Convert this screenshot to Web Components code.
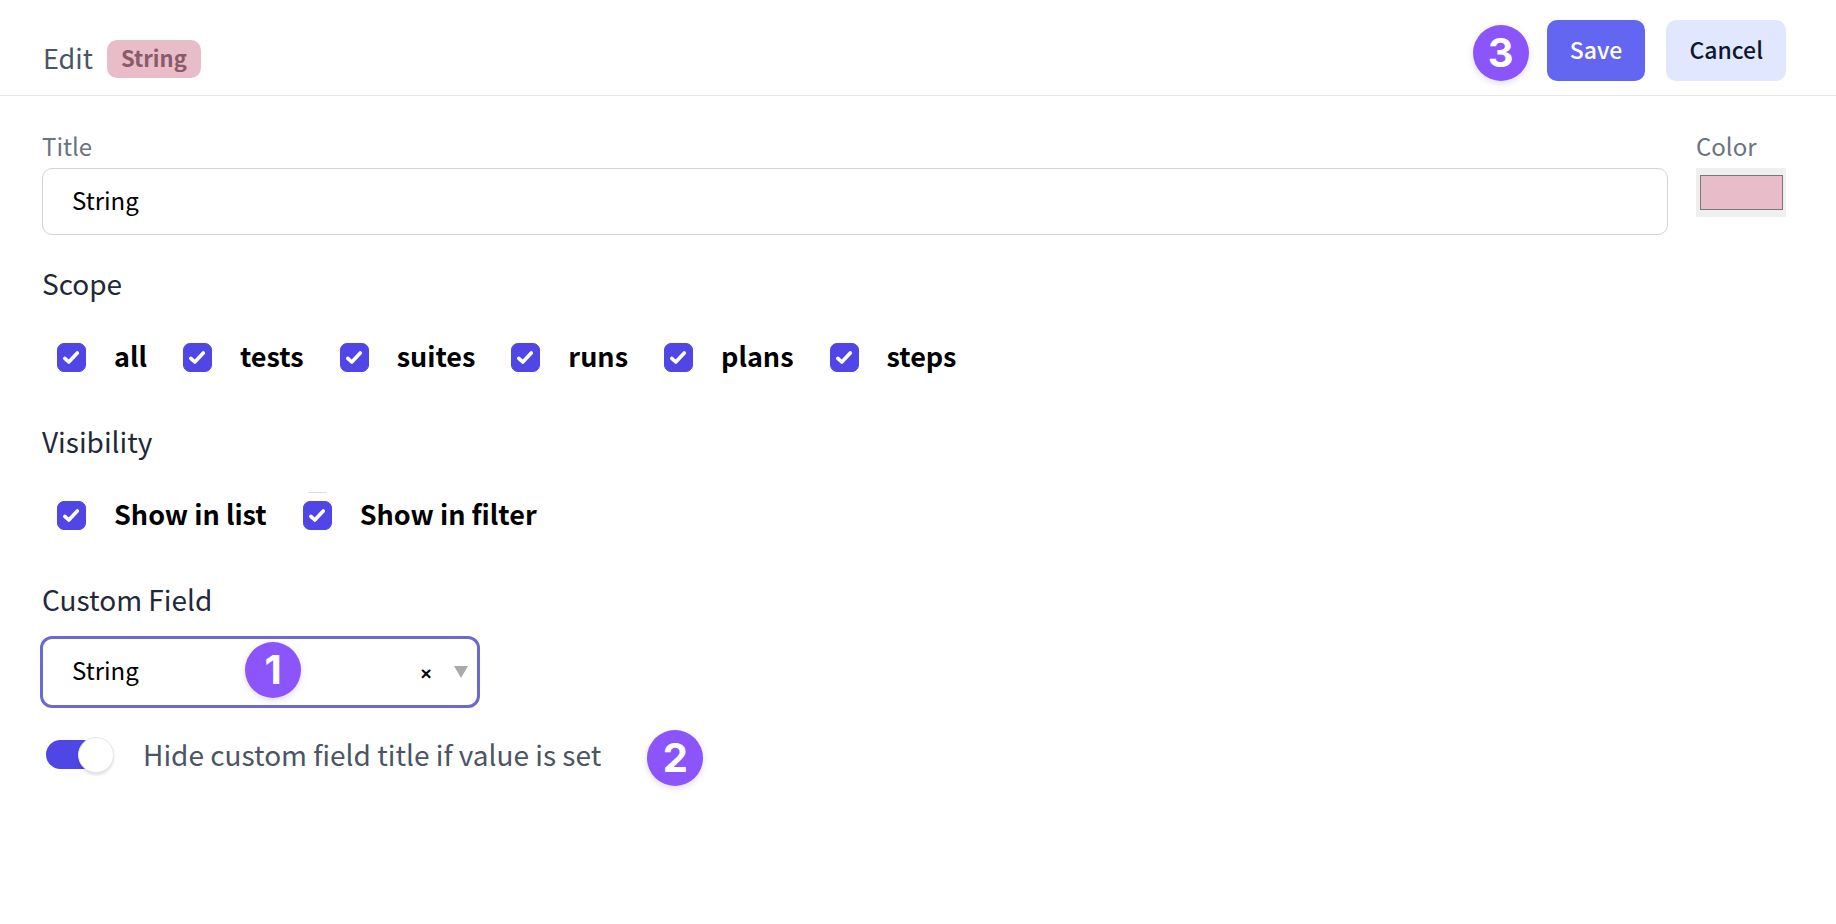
<!DOCTYPE html>
<html lang="en">
<head>
<meta charset="utf-8">
<meta name="viewport" content="width=device-width, initial-scale=1">
<title>Edit String</title>
<style>
  body { margin: 0; background: #fff; color: #000; font-family: "Noto Sans CJK SC", "Noto Sans", sans-serif; }
</style>
</head>
<body>
<field-editor></field-editor>
<script>
const define = (name, html, setup) => {
  const template = document.createElement('template');
  template.innerHTML = `<style>*, *::before { box-sizing: border-box; }</style>${html}`;
  customElements.define(name, class extends HTMLElement {
    constructor() {
      super();
      this.attachShadow({ mode: 'open' }).append(template.content.cloneNode(true));
    }
    connectedCallback() { if (setup) setup(this, this.shadowRoot); }
  });
};

define('step-badge', `
<style>
  :host { display: grid; place-items: center; flex: none; width: 56px; height: 56px; border-radius: 50%;
    background: #8c54fb; color: #fff; box-shadow: 0 2px 6px rgb(80 60 140 / 20%);
    font: 700 40px/56px Inter, sans-serif; }
</style>
<slot></slot>`);

define('action-button', `
<style>
  :host { display: block; }
  button { display: block; border: 0; border-radius: 10px; padding: 13px 23px 16px; cursor: pointer;
    font: 500 23px/32px "Noto Sans CJK SC", sans-serif; background: #e0e7ff; color: #0f172a; }
  :host([primary]) button { background: #6366f1; color: #fff; }
</style>
<button type="button"><slot></slot></button>`);

define('editor-header', `
<style>
  :host { display: flex; align-items: flex-start; justify-content: space-between; gap: 24px;
    padding: 20px 50px 14px 43px; border-bottom: 1px solid #e5e7eb; }
  .name { display: flex; align-items: flex-start; gap: 14px; padding-top: 20px; }
  h1 { margin: 0; font-weight: 400; font-size: 27px; line-height: 36px; color: #4b5563; }
  .tag { padding: 1px 14px 5px; border-radius: 10px; background: #e8bcc9; color: #8b5a68;
    font-weight: 700; font-size: 22px; line-height: 32px; }
  .actions { display: flex; align-items: center; gap: 21px; }
  step-badge { margin: 4px -3px 0 0; }
</style>
<div class="name"><h1>Edit</h1><span class="tag">String</span></div>
<div class="actions">
  <step-badge>3</step-badge>
  <action-button primary>Save</action-button>
  <action-button>Cancel</action-button>
</div>`);

define('text-field', `
<style>
  :host { display: flex; flex-direction: column; gap: 6px; }
  label { font-size: 24px; line-height: 32px; color: #6b7280; }
  input { width: 100%; height: 67px; padding: 0 29px 4px; border: 1px solid #d1d5db; border-radius: 10px;
    background: #fff; color: #000; outline: 0; font: 400 24px/36px "Noto Sans CJK SC", sans-serif; }
</style>
<label for="value"></label><input id="value" type="text">`, (host, root) => {
  root.querySelector('label').textContent = host.getAttribute('label');
  root.querySelector('input').value = host.getAttribute('value');
});

define('color-field', `
<style>
  :host { display: flex; flex-direction: column; gap: 6px; }
  label { font-size: 24px; line-height: 32px; color: #6b7280; }
  input { appearance: none; width: 90px; height: 49px; padding: 7px 3px 7px 4px; border: 0; background: #efefef; }
  input::-webkit-color-swatch-wrapper { padding: 0; }
  input::-webkit-color-swatch { border: 1px solid #777; border-radius: 0; }
</style>
<label for="value"></label><input id="value" type="color">`, (host, root) => {
  root.querySelector('label').textContent = host.getAttribute('label');
  root.querySelector('input').value = host.getAttribute('value');
});

define('check-option', `
<style>
  :host { display: block; position: relative; }
  :host([marked])::before { content: ""; position: absolute; left: 5px; top: -5px; width: 19px; height: 1px; background: #dcdde0; }
  label { display: flex; align-items: center; gap: 28px; font-weight: 700; font-size: 27px; line-height: 34px; }
  .text { padding-bottom: 2px; }
  .box { display: grid; width: 29px; height: 29px; }
  .box > * { grid-area: 1 / 1; margin: 0; width: 29px; height: 29px; }
  input { appearance: none; border-radius: 7px; border: 1px solid #d1d5db; background: #fff; }
  input:checked { border-color: #4f46e5; background: #4f46e5; }
  svg { pointer-events: none; }
  input:not(:checked) + svg { visibility: hidden; }
</style>
<label>
  <span class="box"><input type="checkbox" checked>
    <svg viewBox="0 0 29 29" fill="none" stroke="#fff" stroke-width="3.6" stroke-linecap="round" stroke-linejoin="round"><path d="M7.8 15.4 11.8 19 20.3 10"/></svg></span>
  <span class="text"><slot></slot></span>
</label>`);

define('option-group', `
<style>
  :host { display: block; }
  fieldset { border: 0; margin: 0; padding: 0; min-width: 0; }
  legend { padding: 0; font-size: 28px; line-height: 36px; color: #1f2937; }
  .options { display: flex; flex-wrap: wrap; gap: 16px 36px; padding: 38px 0 0 15px; }
</style>
<fieldset><legend></legend><div class="options"><slot></slot></div></fieldset>`, (host, root) => {
  root.querySelector('legend').textContent = host.getAttribute('label');
});

define('type-select', `
<style>
  :host { display: flex; flex-direction: column; gap: 19px; }
  label { font-size: 28px; line-height: 36px; color: #1f2937; }
  .control { position: relative; width: 440px; max-width: 100%; margin-left: -2px; }
  select { display: block; appearance: none; width: 100%; height: 72px; padding: 0 96px 4px 29px;
    border: 3px solid #6c6ace; border-radius: 12px; background: #fff; color: #000; outline: 0;
    font: 400 24px/36px "Noto Sans CJK SC", sans-serif; }
  button { position: absolute; right: 42px; top: 26px; width: 24px; height: 24px; padding: 0; border: 0;
    background: none; color: #000; font: 700 19px/24px "Liberation Sans", sans-serif; }
  .arrow { position: absolute; right: 12px; top: 30px; width: 14px; height: 12px; pointer-events: none; fill: #aaa; }
  step-badge { position: absolute; left: 205px; top: 6px; pointer-events: none; }
</style>
<label for="type">Custom Field</label>
<div class="control">
  <select id="type"><option>String</option></select>
  <button type="button" aria-label="Clear">×</button>
  <svg class="arrow" viewBox="0 0 14 12"><path d="M0 0H14L7 12Z"/></svg>
  <step-badge>1</step-badge>
</div>`);

define('toggle-switch', `
<style>
  :host { display: block; }
  label { display: flex; align-items: center; gap: 31px; font-size: 28px; line-height: 36px; color: #4b5563; }
  input { appearance: none; position: relative; flex: none; width: 66px; height: 29px; margin: 0; border-radius: 15px; background: #d1d5db; }
  input::before { content: ""; position: absolute; left: -2px; top: -3px; width: 36px; height: 36px; border-radius: 50%;
    background: #fff; border: 1px solid #e5e7eb; box-shadow: 0 2px 3px rgb(0 0 0 / 12%); }
  input:checked { background: #4f46e5; }
  input:checked::before { left: 32px; }
</style>
<label><input type="checkbox" role="switch" checked><span><slot></slot></span></label>`);

define('field-editor', `
<style>
  :host { display: block; }
  main { display: flex; flex-direction: column; padding: 34px 50px 48px 42px; }
  .identity { display: flex; align-items: flex-start; gap: 28px; margin-bottom: 30px; }
  text-field { flex: 1; min-width: 0; }
  option-group { margin-bottom: 48px; }
  .hide { display: flex; align-items: flex-start; gap: 46px; margin-top: 22px; padding-left: 4px; }
  toggle-switch { padding-top: 6px; }
</style>
<editor-header></editor-header>
<main>
  <div class="identity">
    <text-field label="Title" value="String"></text-field>
    <color-field label="Color" value="#e8bcc9"></color-field>
  </div>
  <option-group label="Scope">
    <check-option>all</check-option><check-option>tests</check-option><check-option>suites</check-option>
    <check-option>runs</check-option><check-option>plans</check-option><check-option>steps</check-option>
  </option-group>
  <option-group label="Visibility">
    <check-option>Show in list</check-option><check-option marked>Show in filter</check-option>
  </option-group>
  <type-select></type-select>
  <div class="hide">
    <toggle-switch>Hide custom field title if value is set</toggle-switch>
    <step-badge>2</step-badge>
  </div>
</main>`);
</script>
</body>
</html>
